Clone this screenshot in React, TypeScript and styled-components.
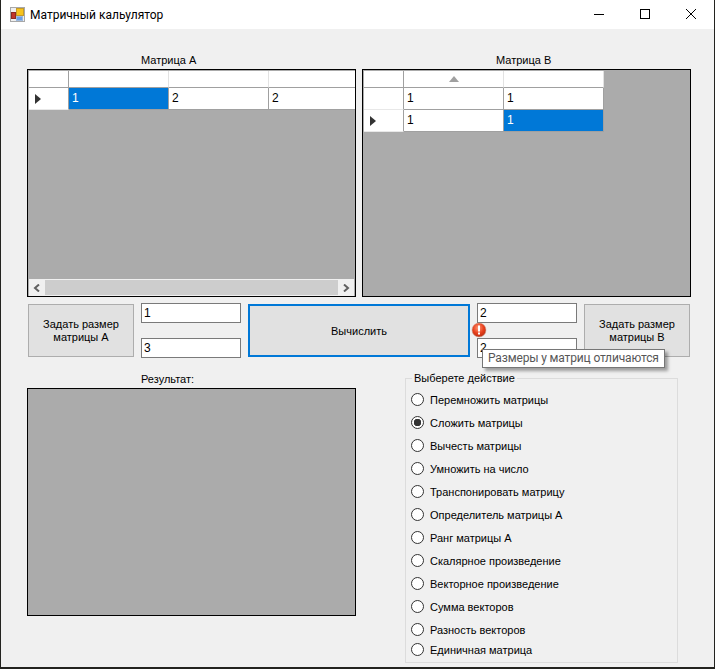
import styled, { createGlobalStyle } from "styled-components";

const GlobalStyle = createGlobalStyle`
  html, body {
    margin: 0;
    padding: 0;
    background: #23231f;
  }
  body {
    font-family: "Liberation Sans", Arial, sans-serif;
    font-size: 11px;
    color: #000;
  }
`

const Window = styled.div`
  position: relative;
  width: 713px;
  height: 667px;
  margin-left: 1px;
  background: #f0f0f0;
  overflow: hidden;
`

const TitleBar = styled.header`
  display: flex;
  align-items: center;
  height: 29px;
  background: #fff;
  padding-left: 9px;
`

const TitleText = styled.span`
  margin-left: 5px;
  font-family: Roboto, sans-serif;
  font-size: 12px;
  color: #000;
`

const WindowControls = styled.div`
  display: flex;
  margin-left: auto;
  height: 100%;
`

const ControlButton = styled.div`
  display: flex;
  align-items: center;
  justify-content: center;
  width: 46px;
  height: 100%;
  padding-bottom: 2px;
  box-sizing: border-box;
`

const Content = styled.main`
  padding: 24px 0 0 26px;
`

const MatrixRow = styled.section`
  display: flex;
  gap: 6px;
`

const MatrixPanel = styled.div`
  width: 329px;
`

const PanelLabel = styled.div<{ $indent: number }>`
  height: 16px;
  line-height: 14px;
  padding-left: ${(p) => p.$indent}px;
`

const MatrixGrid = styled.div`
  display: flex;
  flex-direction: column;
  box-sizing: border-box;
  height: 228px;
  border: 1px solid #000;
  padding: 1px 1px 0;
  background: #ababab;
  overflow: hidden;
`

const GridRow = styled.div`
  display: flex;
  flex: none;
`

const HeaderCell = styled.div<{ $w: number; $strong?: boolean }>`
  display: flex;
  flex: none;
  align-items: center;
  justify-content: center;
  box-sizing: border-box;
  width: ${(p) => p.$w}px;
  height: 17px;
  background: #fff;
  border-right: 1px solid ${(p) => (p.$strong ? "#a0a0a0" : "#e2e2e2")};
  border-bottom: 1px solid #a0a0a0;
`

const RowHeader = styled.div`
  display: flex;
  flex: none;
  align-items: center;
  box-sizing: border-box;
  width: 40px;
  height: 22px;
  padding-left: 6px;
  background: #fff;
  border-right: 1px solid #a0a0a0;
  border-bottom: 1px solid #e8e8e8;
`

const DataCell = styled.div<{ $w: number; $selected?: boolean }>`
  flex: none;
  box-sizing: border-box;
  width: ${(p) => p.$w}px;
  height: 22px;
  padding: 3px 0 0 3px;
  font-size: 12px;
  line-height: 15px;
  background: ${(p) => (p.$selected ? "#0078d7" : "#fff")};
  color: ${(p) => (p.$selected ? "#fff" : "#000")};
  border-right: 1px solid #a0a0a0;
  border-bottom: 1px solid #a0a0a0;
`

const ScrollBar = styled.div`
  display: flex;
  align-items: center;
  justify-content: space-between;
  flex: none;
  box-sizing: border-box;
  margin-top: auto;
  height: 17px;
  padding: 1px 0;
  background: #f0f0f0;
`

const ScrollArrow = styled.div`
  display: flex;
  align-items: center;
  justify-content: center;
  width: 16px;
  height: 15px;
`

const ScrollThumb = styled.div`
  flex: 1;
  height: 15px;
  background: #cdcdcd;
`

const ControlsRow = styled.section`
  display: flex;
  align-items: center;
  gap: 7px;
  margin: 6px 0 0 1px;
  height: 55px;
`

const SizeButton = styled.button`
  box-sizing: border-box;
  width: 106px;
  height: 53px;
  padding: 0;
  font: 11px/13px "Liberation Sans", Arial, sans-serif;
  color: #000;
  background: #e1e1e1;
  border: 1px solid #adadad;
`

const SizeInputs = styled.div`
  display: flex;
  flex-direction: column;
  justify-content: space-between;
  width: 100px;
  height: 55px;
`

const SizeInput = styled.input`
  box-sizing: border-box;
  width: 100px;
  height: 20px;
  padding: 0 2px;
  font: 12px "Liberation Sans", Arial, sans-serif;
  color: #000;
  background: #fff;
  border: 1px solid #7a7a7a;
  border-radius: 0;
  outline: none;
`

const CalcButton = styled.button`
  box-sizing: border-box;
  width: 222px;
  height: 53px;
  padding: 0;
  font: 11px "Liberation Sans", Arial, sans-serif;
  color: #000;
  background: #e1e1e1;
  border: 2px solid #0078d7;
`

const ErrorIcon = styled.svg`
  position: absolute;
  left: 470px;
  top: 322px;
`

const Tooltip = styled.div`
  position: absolute;
  left: 481px;
  top: 349px;
  box-sizing: border-box;
  height: 19px;
  padding: 0 5px;
  line-height: 17px;
  font-family: Roboto, sans-serif;
  font-size: 12px;
  letter-spacing: -0.15px;
  white-space: nowrap;
  color: #575757;
  background: #fff;
  border: 1px solid #767676;
  box-shadow: 3px 3px 3px rgba(0, 0, 0, 0.35);
`

const BottomRow = styled.section`
  display: flex;
  margin-top: 14px;
`

const ResultPanel = styled.div`
  width: 329px;
`

const ResultBox = styled.div`
  box-sizing: border-box;
  height: 228px;
  background: #ababab;
  border: 1px solid #000;
`

const ActionGroup = styled.fieldset`
  box-sizing: border-box;
  width: 273px;
  height: 291px;
  margin: 0 0 0 49px;
  padding: 3px 0 0 5px;
  border: 1px solid #dcdcdc;
  min-width: 0;
`

const GroupTitle = styled.legend`
  margin-left: 1px;
  padding: 0 2px;
  line-height: 13px;
`

const ActionRow = styled.label<{ $tight?: boolean }>`
  display: flex;
  align-items: center;
  gap: 6px;
  height: ${(p) => (p.$tight ? 17 : 23)}px;
`

const ActionRadio = styled.input`
  appearance: none;
  box-sizing: border-box;
  flex: none;
  width: 13px;
  height: 13px;
  margin: 0;
  background: #fff;
  border: 1px solid #333;
  border-radius: 50%;

  &:checked {
    background: radial-gradient(circle, #333 0 3.5px, #fff 4px);
  }
`

const actions = [
  "Перемножить матрицы",
  "Сложить матрицы",
  "Вычесть матрицы",
  "Умножить на число",
  "Транспонировать матрицу",
  "Определитель матрицы А",
  "Ранг матрицы А",
  "Скалярное произведение",
  "Векторное произведение",
  "Сумма векторов",
  "Разность векторов",
  "Единичная матрица",
]

const AppIcon = () => (
  <svg width="15" height="15" viewBox="0 0 15 15">
    <rect x="0.5" y="0.5" width="14" height="14" fill="#efefef" stroke="#a8a8a8" />
    <rect x="6.5" y="1.5" width="7" height="7" fill="#f6c21c" stroke="#c49a2a" />
    <rect x="1.5" y="5.5" width="4" height="6" fill="#c0352b" stroke="#8c2a22" />
    <rect x="6.5" y="9.5" width="6" height="4" fill="#6a9fe6" stroke="#9db9dd" />
  </svg>
)

const RowArrow = () => (
  <svg width="6" height="10" viewBox="0 0 6 10">
    <path d="M0 0 L6 5 L0 10 Z" fill="#333" />
  </svg>
)

const SortArrow = () => (
  <svg width="10" height="6" viewBox="0 0 10 6">
    <path d="M5 0 L10 6 L0 6 Z" fill="#a0a0a0" />
  </svg>
)

const Chevron = ({ d }: { d: string }) => (
  <svg width="8" height="8" viewBox="0 0 8 8">
    <path d={d} fill="none" stroke="#606060" strokeWidth="2" />
  </svg>
)

export default function App() {
  return (
    <>
      <GlobalStyle />
      <Window>
        <TitleBar>
          <AppIcon />
          <TitleText>Матричный кальулятор</TitleText>
          <WindowControls>
            <ControlButton>
              <svg width="10" height="10" viewBox="0 0 10 10">
                <path d="M0 5.5 H10" stroke="#000" />
              </svg>
            </ControlButton>
            <ControlButton>
              <svg width="10" height="10" viewBox="0 0 10 10">
                <rect x="0.5" y="0.5" width="9" height="9" fill="none" stroke="#000" />
              </svg>
            </ControlButton>
            <ControlButton>
              <svg width="10" height="10" viewBox="0 0 10 10">
                <path d="M0 0 L10 10 M10 0 L0 10" stroke="#000" />
              </svg>
            </ControlButton>
          </WindowControls>
        </TitleBar>

        <Content>
          <MatrixRow>
            <MatrixPanel>
              <PanelLabel $indent={114}>Матрица А</PanelLabel>
              <MatrixGrid>
                <GridRow>
                  <HeaderCell $w={40} $strong />
                  <HeaderCell $w={100} />
                  <HeaderCell $w={100} />
                  <HeaderCell $w={87} />
                </GridRow>
                <GridRow>
                  <RowHeader>
                    <RowArrow />
                  </RowHeader>
                  <DataCell $w={100} $selected>1</DataCell>
                  <DataCell $w={100}>2</DataCell>
                  <DataCell $w={87}>2</DataCell>
                </GridRow>
                <ScrollBar>
                  <ScrollArrow>
                    <Chevron d="M6 0.5 L2 4 L6 7.5" />
                  </ScrollArrow>
                  <ScrollThumb />
                  <ScrollArrow>
                    <Chevron d="M2 0.5 L6 4 L2 7.5" />
                  </ScrollArrow>
                </ScrollBar>
              </MatrixGrid>
            </MatrixPanel>
            <MatrixPanel>
              <PanelLabel $indent={134}>Матрица В</PanelLabel>
              <MatrixGrid>
                <GridRow>
                  <HeaderCell $w={40} $strong />
                  <HeaderCell $w={100}>
                    <SortArrow />
                  </HeaderCell>
                  <HeaderCell $w={100} />
                </GridRow>
                <GridRow>
                  <RowHeader />
                  <DataCell $w={100}>1</DataCell>
                  <DataCell $w={100}>1</DataCell>
                </GridRow>
                <GridRow>
                  <RowHeader>
                    <RowArrow />
                  </RowHeader>
                  <DataCell $w={100}>1</DataCell>
                  <DataCell $w={100} $selected>1</DataCell>
                </GridRow>
              </MatrixGrid>
            </MatrixPanel>
          </MatrixRow>

          <ControlsRow>
            <SizeButton>
              Задать размер
              <br />
              матрицы А
            </SizeButton>
            <SizeInputs>
              <SizeInput defaultValue="1" />
              <SizeInput defaultValue="3" />
            </SizeInputs>
            <CalcButton>Вычислить</CalcButton>
            <SizeInputs>
              <SizeInput defaultValue="2" />
              <SizeInput defaultValue="2" />
            </SizeInputs>
            <SizeButton>
              Задать размер
              <br />
              матрицы В
            </SizeButton>
          </ControlsRow>

          <BottomRow>
            <ResultPanel>
              <PanelLabel $indent={114}>Результат:</PanelLabel>
              <ResultBox />
            </ResultPanel>
            <ActionGroup>
              <GroupTitle>Выберете действие</GroupTitle>
              {actions.map((action, i) => (
                <ActionRow key={action} $tight={i === actions.length - 1}>
                  <ActionRadio type="radio" name="action" defaultChecked={i === 1} />
                  {action}
                </ActionRow>
              ))}
            </ActionGroup>
          </BottomRow>
        </Content>

        <ErrorIcon width="16" height="16" viewBox="0 0 16 16">
          <defs>
            <radialGradient id="err" cx="0.45" cy="0.35" r="0.7">
              <stop offset="0" stopColor="#ff9a7a" />
              <stop offset="0.55" stopColor="#e8401c" />
              <stop offset="1" stopColor="#b32a10" />
            </radialGradient>
          </defs>
          <circle cx="8" cy="8" r="7" fill="url(#err)" stroke="#c9a08f" strokeWidth="0.5" />
          <rect x="7" y="3.5" width="2" height="6" fill="#fff" />
          <rect x="7" y="10.5" width="2" height="2" fill="#fff" />
        </ErrorIcon>
        <Tooltip>Размеры у матриц отличаются</Tooltip>
      </Window>
    </>
  )
}
